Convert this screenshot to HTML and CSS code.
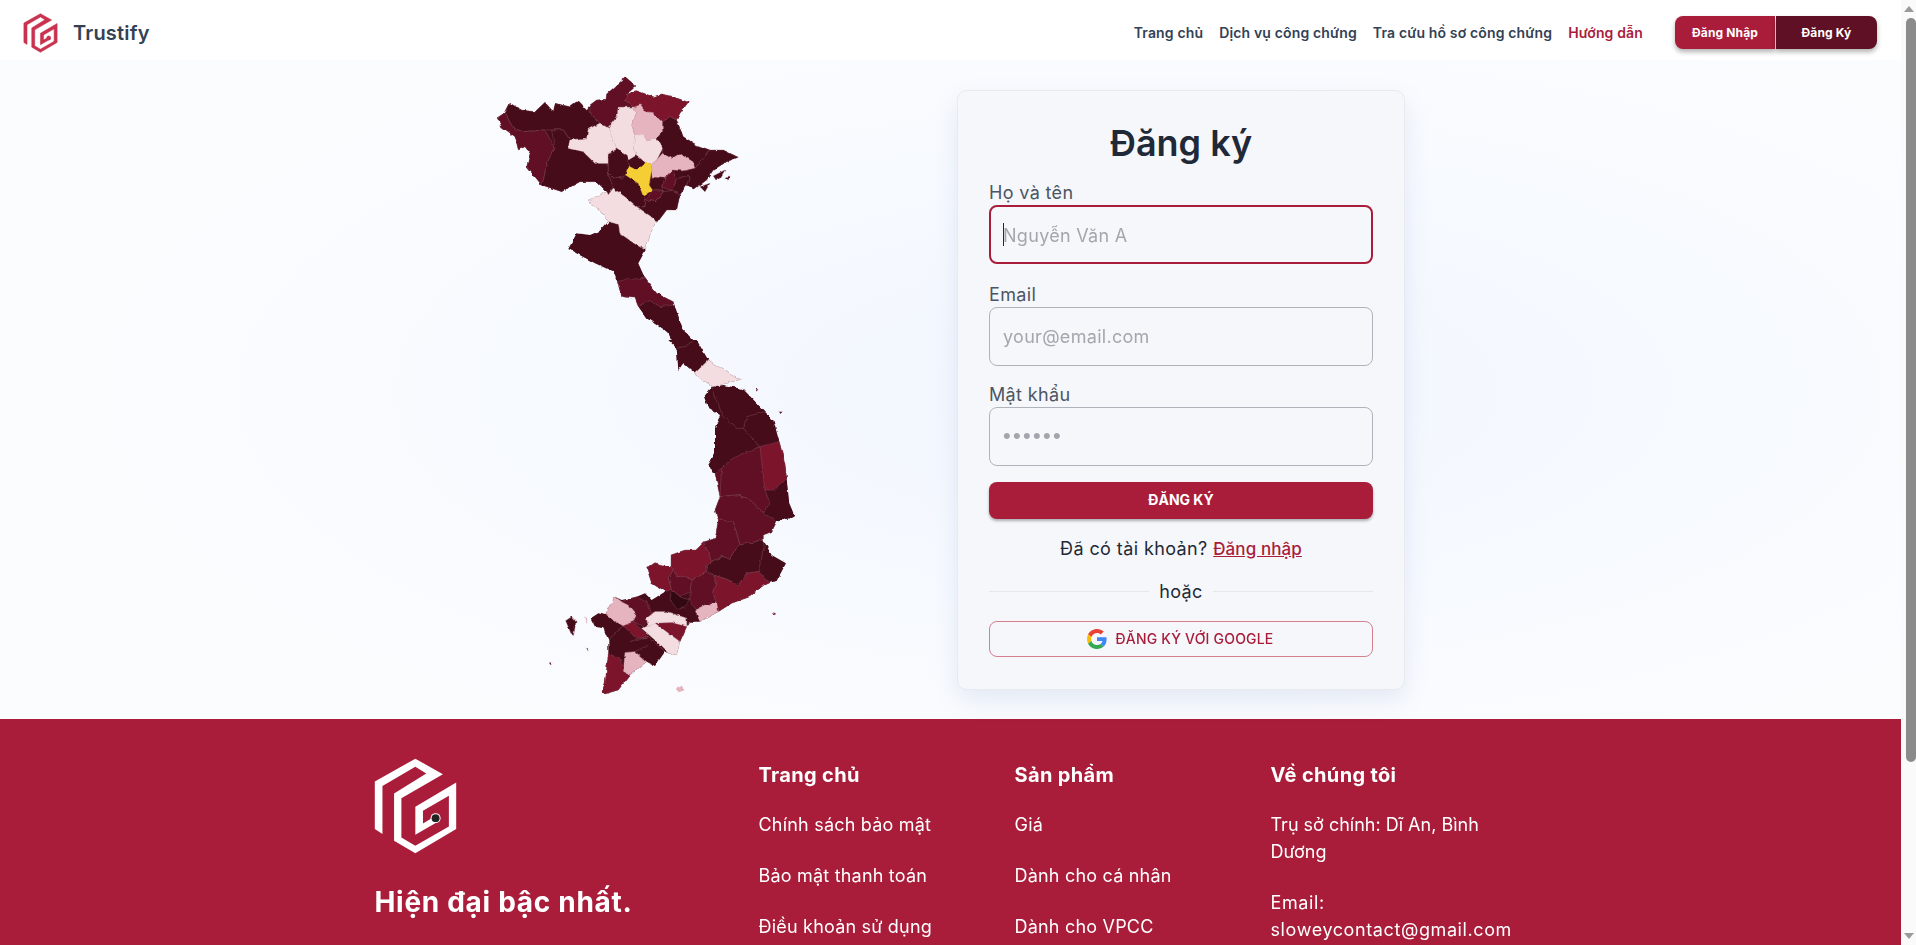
FILE: index.html
```html
<!DOCTYPE html>
<html lang="vi">
<head>
<meta charset="UTF-8">
<meta name="viewport" content="width=device-width, initial-scale=1.0">
<title>Trustify - Đăng ký</title>
<link rel="stylesheet" href="styles.css">
</head>
<body>

<svg class="defs" width="0" height="0" aria-hidden="true">
  <symbol id="logo" viewBox="70 83 255 295">
    <path d="M75 157 L197 88 L280 135 L155 207 L155 325 L197 350 L298 292 L298 200 L220 245 L220 283 L250 265 L270 275 L197 317 L197 233 L320 160 L320 300 L197 373 L133 335 L133 193 L230 133 L197 112 L98 170 L98 315 L75 300 Z"/>
    <circle class="logo-ring" cx="258" cy="267" r="15"/>
    <circle class="logo-dot" cx="258" cy="267" r="12"/>
  </symbol>
</svg>

<div class="app">
  <div class="page">

    <header class="navbar">
      <a class="brand" href="#">
        <svg class="brand-logo"><use href="#logo"/></svg>
        <span class="brand-name">Trustify</span>
      </a>
      <nav class="nav-links">
        <a href="#">Trang chủ</a>
        <a href="#">Dịch vụ công chứng</a>
        <a href="#">Tra cứu hồ sơ công chứng</a>
        <a href="#" class="active">Hướng dẫn</a>
      </nav>
      <div class="nav-buttons">
        <a href="#" class="btn-login">Đăng Nhập</a>
        <a href="#" class="btn-register">Đăng Ký</a>
      </div>
    </header>

    <main class="hero">
      <svg class="map" viewBox="496 70 320 640" aria-label="Bản đồ Việt Nam">
        <defs>
          <filter id="rough" x="-5%" y="-5%" width="110%" height="110%" color-interpolation-filters="sRGB">
            <feTurbulence type="fractalNoise" baseFrequency="0.16" numOctaves="2" seed="4" result="noise"/>
            <feDisplacementMap in="SourceGraphic" in2="noise" scale="3.5" xChannelSelector="R" yChannelSelector="G"/>
            <feGaussianBlur stdDeviation="0.3"/>
          </filter>
        </defs>
        <g filter="url(#rough)">
        <g transform="translate(480 70) scale(.3333)">
          <polygon class="c4 base" points="52,145 75,130 90,100 125,120 165,125 195,97 220,125 225,100 270,110 295,92 320,118 330,105 350,90 378,88 380,72 405,50 437,22 468,48 440,72 470,62 520,80 545,72 580,80 625,97 600,130 590,150 610,200 650,225 690,240 730,240 775,262 740,275 700,300 680,330 640,360 620,345 600,375 590,420 560,420 530,460 525,458 510,495 497,540 475,580 495,625 530,670 580,695 610,780 645,815 640,840 590,840 565,790 500,745 475,710 465,685 425,680 412,635 400,605 345,580 265,537 290,490 330,495 360,482 385,455 350,410 330,405 325,390 380,365 350,335 300,335 245,365 185,345 140,290 150,250 135,230 115,240 105,200 65,170"/>
          <polygon class="c3" points="380,72 405,50 437,22 468,48 440,72 437,92 462,112 415,112 412,140 385,175 360,160 330,130 330,105 350,90 378,88"/>
          <polygon class="c2" points="437,92 440,72 470,62 520,80 545,72 580,80 625,97 600,130 590,150 570,140 548,155 520,128 495,125 480,105 462,112"/>
          <polygon class="c4" points="75,130 90,100 125,120 165,125 195,97 220,125 225,100 270,110 295,92 320,118 330,130 360,160 350,165 325,178 320,205 270,210 250,180 215,180 195,180 130,185 100,175"/>
          <polygon class="c3" points="52,145 75,130 100,175 130,185 195,180 225,235 205,270 190,330 185,345 140,290 150,250 135,230 115,240 105,200 65,170"/>
          <polygon class="c4" points="215,180 250,180 270,210 265,235 310,245 345,280 385,280 385,310 400,350 385,375 380,365 350,335 300,335 245,365 185,345 190,330 205,270 225,235"/>
          <polygon class="c0" points="415,112 462,112 470,130 455,165 465,195 460,235 470,255 445,270 440,255 410,235 385,175 412,140"/>
          <polygon class="c0" points="325,178 350,165 360,160 385,175 410,235 385,250 385,280 345,280 310,245 265,235 270,210 320,205"/>
          <polygon class="c1" points="462,112 480,105 495,125 520,128 548,155 548,185 530,205 500,210 490,195 465,195 455,165 470,130"/>
          <polygon class="c0" points="465,195 490,195 500,210 530,205 548,235 530,270 513,285 497,278 470,255 460,235"/>
          <polygon class="c4" points="385,250 410,235 440,255 445,270 445,288 437,315 430,325 395,320 385,310 385,280"/>
          <polygon class="c4" points="385,310 395,320 430,325 437,315 475,340 490,378 498,390 495,410 470,410 440,385 400,355"/>
          <polygon class="c1" points="530,270 548,250 575,265 600,250 640,275 645,295 610,303 575,300 555,325 517,322 513,285"/>
          <polygon class="c4" points="548,155 570,140 590,150 610,200 650,225 690,240 670,265 645,295 640,275 600,250 575,265 548,250 548,235 530,205 548,185"/>
          <polygon class="c4" points="645,295 670,265 690,240 730,240 775,262 740,275 700,300 680,330 640,360 620,345 630,320 590,325 575,300 610,303"/>
          <polygon class="c4" points="517,322 555,325 545,350 550,365 517,360 507,345"/>
          <polygon class="c3" points="555,325 575,300 590,325 575,362 545,350"/>
          <polygon class="c4" points="590,325 630,320 620,345 600,375 575,362"/>
          <polygon class="c3" points="517,360 550,365 540,378 525,395 498,390"/>
          <polygon class="c4" points="550,365 575,362 600,375 590,420 560,420 530,460 520,445 470,410 495,410 498,390 525,395 540,378"/>
          <polygon class="yellow" points="445,288 470,300 497,278 513,285 515,300 507,345 517,360 490,378 475,340 437,315"/>
          <polygon class="c0" points="325,390 380,365 385,375 400,355 440,385 470,410 520,445 530,460 525,458 510,495 497,540 470,525 420,490 415,462 385,455 350,410 330,405"/>
          <polygon class="c3" points="412,635 440,628 495,625 530,670 580,695 580,705 540,710 510,692 475,710 465,685 425,680"/>
          <polygon class="c4" points="700,318 735,300 722,322 708,330"/>
          <polygon class="c4" points="735,322 750,318 745,330"/>
          <polygon class="c4" points="660,350 690,340 675,365"/>
        </g>
        <g transform="translate(540 340) scale(.3333)">
          <polygon class="c4 base" points="385,0 470,0 505,60 590,115 605,118 520,140 550,135 610,148 675,215 700,240 718,305 735,370 740,415 748,490 765,530 710,545 695,575 670,585 670,600 695,645 738,670 710,723 690,728 665,740 630,770 575,790 535,815 480,845 450,845 440,860 420,905 410,945 385,940 375,935 345,978 320,965 270,1005 235,1050 195,1062 185,1055 195,1030 205,940 205,900 190,865 165,860 152,835 175,820 195,825 225,770 245,780 290,770 315,760 335,780 375,755 335,730 320,685 345,668 393,680 393,645 435,630 465,630 490,605 525,595 535,540 525,510 540,470 525,400 515,395 505,375 525,340 525,265 540,225 505,205 492,170 515,140 520,140 480,115 465,100 430,70 415,90 410,25"/>
          <polygon class="c0" points="505,60 590,115 605,118 520,140 480,115 465,100"/>
          <polygon class="c3" points="545,385 570,360 610,340 660,320 690,445 675,450 690,490 670,518 625,475 590,465 540,470 525,400"/>
          <polygon class="c2" points="660,320 718,305 735,370 740,415 700,450 675,450"/>
          <polygon class="c3" points="540,470 590,465 625,475 670,518 710,545 695,575 670,585 670,600 600,615 580,545 535,540 525,510"/>
          <polygon class="c3" points="535,540 580,545 600,615 585,630 570,655 545,650 515,665 490,605 525,595"/>
          <polygon class="c4" points="585,630 600,615 670,600 672,620 655,695 620,700 595,735 560,718 520,705 497,680 515,665 545,650 570,655"/>
          <polygon class="c2" points="520,705 560,718 595,735 620,700 655,695 690,728 665,740 630,770 575,790 535,815 530,790 520,760 530,730"/>
          <polygon class="c2" points="393,645 435,630 465,630 490,605 515,665 497,680 500,695 455,723 435,708 410,710 393,680"/>
          <polygon class="c2" points="320,685 345,668 393,680 400,690 385,715 395,748 375,755 335,730"/>
          <polygon class="c3" points="385,715 400,690 410,710 435,708 455,723 450,755 420,770 395,748"/>
          <polygon class="c3" points="455,723 500,695 520,705 530,730 520,760 530,790 495,795 465,810 450,780 450,755"/>
          <polygon class="c1" points="465,810 495,795 530,790 535,815 480,845"/>
          <polygon class="c5" points="395,748 420,770 450,780 435,800 410,805 390,780"/>
          <polygon class="c1" points="225,770 245,785 265,795 290,825 280,845 250,858 195,825"/>
          <polygon class="c3" points="245,785 290,770 325,790 335,825 310,860 280,845 290,825 265,795"/>
          <polygon class="c0" points="320,835 345,815 380,815 440,835 440,860 395,848 345,850 325,860"/>
          <polygon class="c2" points="345,850 395,848 440,860 420,905 385,880"/>
          <polygon class="c0" points="305,865 330,858 345,850 385,880 420,905 410,945 385,940 345,900"/>
          <polygon class="c2" points="250,858 280,845 325,890 290,895"/>
          <polygon class="c1" points="255,938 285,935 320,965 270,1005 250,995"/>
          <polygon class="c2" points="205,940 245,960 250,995 270,1005 235,1050 195,1062 185,1055 195,1030"/>
          <polygon class="c4" points="77,842 95,830 108,845 100,890 95,885"/>
          <polygon class="c1" points="408,1050 425,1038 433,1050 415,1056"/>
          <polygon class="c2" points="700,818 707,820 704,827"/>
          <polygon class="c1" points="137,834 141,834 140,850"/>
          <polygon class="c3" points="28,968 36,968 32,975"/>
          <polygon class="c3" points="138,920 146,925 144,932"/>
          <polygon class="c4" points="718,215 727,216 722,222"/>
          <polygon class="c3" points="645,146 654,148 650,154"/>
          <polyline class="seam" points="410,25 430,20 460,5"/>
          <polyline class="seam" points="465,100 505,60"/>
          <polyline class="seam" points="515,140 550,230 590,265 610,265 620,230 675,215"/>
          <polyline class="seam" points="610,265 660,320"/>
          <polyline class="seam" points="540,470 545,385"/>
          <polyline class="seam" points="250,858 205,900"/>
          <polyline class="seam" points="270,905 325,890 330,895 375,935"/>
          <polyline class="seam" points="285,935 325,915"/>
        </g>
        </g>
      </svg>

      <section class="card">
        <h1>Đăng ký</h1>
        <form>
          <div class="field field-focus">
            <label for="name">Họ và tên</label>
            <div class="input-wrap">
              <input type="text" id="name" placeholder="Nguyễn Văn A">
              <span class="caret"></span>
            </div>
          </div>
          <div class="field">
            <label for="email">Email</label>
            <div class="input-wrap">
              <input type="email" id="email" placeholder="your@email.com">
            </div>
          </div>
          <div class="field">
            <label for="password">Mật khẩu</label>
            <div class="input-wrap">
              <input type="text" class="password" id="password" placeholder="••••••">
            </div>
          </div>
          <button type="button" class="submit">ĐĂNG KÝ</button>
        </form>
        <p class="switch">Đã có tài khoản? <a href="#">Đăng nhập</a></p>
        <div class="divider"><span>hoặc</span></div>
        <button type="button" class="google">
          <svg viewBox="0 0 48 48" width="20" height="20">
            <path fill="#EA4335" d="M24 9.5c3.54 0 6.71 1.22 9.21 3.6l6.85-6.85C35.9 2.38 30.47 0 24 0 14.62 0 6.51 5.38 2.56 13.22l7.98 6.19C12.43 13.72 17.74 9.5 24 9.5z"/>
            <path fill="#4285F4" d="M46.98 24.55c0-1.57-.15-3.09-.38-4.55H24v9.02h12.94c-.58 2.96-2.26 5.48-4.78 7.18l7.73 6c4.51-4.18 7.09-10.36 7.09-17.65z"/>
            <path fill="#FBBC05" d="M10.53 28.59c-.48-1.45-.76-2.99-.76-4.59s.27-3.14.76-4.59l-7.98-6.19C.92 16.46 0 20.12 0 24c0 3.88.92 7.54 2.56 10.78l7.97-6.19z"/>
            <path fill="#34A853" d="M24 48c6.48 0 11.93-2.13 15.89-5.81l-7.73-6c-2.15 1.45-4.92 2.3-8.16 2.3-6.26 0-11.57-4.22-13.47-9.91l-7.98 6.19C6.51 42.62 14.62 48 24 48z"/>
          </svg>
          ĐĂNG KÝ VỚI GOOGLE
        </button>
      </section>
    </main>

    <footer class="footer">
      <div class="footer-grid">
        <div class="footer-brand">
          <svg class="footer-logo"><use href="#logo"/></svg>
          <h2>Hiện đại bậc nhất.</h2>
        </div>
        <div class="footer-col">
          <h3>Trang chủ</h3>
          <a href="#">Chính sách bảo mật</a>
          <a href="#">Bảo mật thanh toán</a>
          <a href="#">Điều khoản sử dụng</a>
        </div>
        <div class="footer-col">
          <h3>Sản phẩm</h3>
          <a href="#">Giá</a>
          <a href="#">Dành cho cá nhân</a>
          <a href="#">Dành cho VPCC</a>
        </div>
        <div class="footer-col">
          <h3>Về chúng tôi</h3>
          <p>Trụ sở chính: Dĩ An, Bình Dương</p>
          <p class="footer-email">Email: sloweycontact@gmail.com</p>
        </div>
      </div>
    </footer>

  </div>

  <div class="scrollbar">
    <span class="arrow-up"></span>
    <span class="thumb"></span>
    <span class="arrow-down"></span>
  </div>
</div>

</body>
</html>
```

FILE: styles.css
```css
* {
  box-sizing: border-box;
}
body {
  margin: 0;
  font-family: Inter, "Noto Sans", sans-serif;
  background-color: #fff;
  color: #1f2937;
}
a {
  text-decoration: none;
  color: inherit;
}
.defs {
  position: absolute;
}
.app {
  display: flex;
  height: 945px;
  overflow: hidden;
}
.page {
  flex: 1;
  min-width: 0;
}

/* navbar */
.navbar {
  display: flex;
  align-items: center;
  height: 60px;
  padding: 5px 24px 0 23px;
  background-color: #fff;
}
.brand {
  display: flex;
  align-items: center;
  gap: 15px;
  margin-right: auto;
}
.brand-logo {
  width: 35px;
  height: 40px;
  color: #c9334f;
  fill: #c9334f;
  stroke: #c9334f;
  stroke-width: 4;
  --dot: #c9334f;
}
.brand-name {
  font-size: 20px;
  font-weight: 600;
  letter-spacing: 0.2px;
  color: #334155;
}
.nav-links {
  display: flex;
  gap: 16px;
  margin-right: 32px;
  font-size: 14px;
  font-weight: 600;
  letter-spacing: 0.15px;
  color: #334155;
}
.nav-links .active {
  color: #a91d3a;
}
.nav-buttons {
  display: flex;
  gap: 1px;
  font-size: 12px;
  font-weight: 700;
  letter-spacing: 0.15px;
  color: #fff;
}
.nav-buttons a {
  display: flex;
  align-items: center;
  justify-content: center;
  height: 33px;
  box-shadow: 0 3px 5px rgba(0, 0, 0, 0.3);
}
.btn-login {
  width: 100px;
  background-color: #a91d3a;
  border-radius: 8px 0 0 8px;
}
.btn-register {
  width: 101px;
  background-color: #601024;
  border-radius: 0 8px 8px 0;
}

/* map + form */
.hero {
  display: flex;
  justify-content: center;
  align-items: center;
  gap: 141px;
  height: 659px;
  background: radial-gradient(ellipse 55% 60% at 60% 50%, #f1f6fe 0%, #f7faff 60%, #fbfcfe 100%);
}
.map {
  width: 320px;
  height: 640px;
}
.map polygon,
.map polyline {
  stroke: #8d5866;
  stroke-width: 1.2;
  stroke-linejoin: round;
}
.map polyline {
  fill: none;
}
.map .base {
  stroke: none;
}
.c0 { fill: #f3dde1; stroke: #e9cdd3 !important; }
.c1 { fill: #e5b4bf; stroke: #dba6b2 !important; }
.c2 { fill: #7c142c; }
.c3 { fill: #600f24; }
.c4 { fill: #470c1a; }
.c5 { fill: #320812; }
.yellow { fill: #f5ce35; stroke: #e4bc2e !important; }

.card {
  width: 448px;
  height: 600px;
  padding: 32px 31px 0;
  background-color: #f5f7fb;
  border: 1px solid #e8eaef;
  border-radius: 10px;
  box-shadow: 0 10px 25px rgba(100, 130, 180, 0.14);
}
.card h1 {
  margin: 0 0 17px;
  font-size: 36px;
  line-height: 40px;
  font-weight: 600;
  text-align: center;
  color: #1f2937;
}
.field {
  margin-bottom: 16px;
}
.field-focus {
  margin-bottom: 18px;
}
.field label {
  display: block;
  height: 25px;
  font-size: 18px;
  line-height: 26px;
  letter-spacing: 0.35px;
  color: #4b5563;
}
.input-wrap {
  position: relative;
}
.input-wrap input {
  display: block;
  width: 100%;
  height: 59px;
  padding: 0 13px;
  font-family: inherit;
  font-size: 18px;
  letter-spacing: 0.3px;
  color: #1f2937;
  background: transparent;
  border: 1px solid #b0b3bb;
  border-radius: 8px;
  outline: none;
}
.field-focus input {
  padding: 2px 12px 0;
  border: 2px solid #a91d3a;
}
.input-wrap input::placeholder {
  color: #a3a6ad;
  opacity: 1;
}
.input-wrap .password::placeholder {
  font-family: "Liberation Sans", sans-serif;
  font-size: 22px;
  letter-spacing: 2.3px;
}
.caret {
  position: absolute;
  left: 14px;
  top: 18px;
  width: 1px;
  height: 23px;
  background-color: #1f2937;
}
.submit {
  display: block;
  width: 100%;
  height: 37px;
  padding: 0 0 2px;
  font-family: inherit;
  font-size: 14px;
  font-weight: 700;
  color: #fff;
  background-color: #a91d3a;
  border: none;
  border-radius: 8px;
  box-shadow: 0 2px 3px rgba(0, 0, 0, 0.3);
}
.switch {
  margin: 16px 0 0;
  font-size: 18px;
  line-height: 28px;
  letter-spacing: 0.4px;
  text-align: center;
  color: #1f2937;
}
.switch a {
  font-size: 17px;
  font-weight: 500;
  letter-spacing: 0.1px;
  color: #a91d3a;
  text-decoration: underline;
}
.divider {
  display: flex;
  align-items: center;
  margin: 15px 0 15px;
  font-size: 18px;
  line-height: 28px;
  letter-spacing: 0.4px;
}
.divider::before,
.divider::after {
  content: "";
  flex: 1;
  height: 1px;
  background-color: #e5e7eb;
}
.divider span {
  padding: 0 10px;
}
.google {
  display: flex;
  align-items: center;
  justify-content: center;
  gap: 9px;
  width: 100%;
  height: 36px;
  padding: 0 2px 0 0;
  font-family: inherit;
  font-size: 14px;
  font-weight: 500;
  letter-spacing: 0.2px;
  color: #a91d3a;
  background: transparent;
  border: 1px solid #d4808f;
  border-radius: 8px;
}

/* footer */
.footer {
  height: 226px;
  padding-top: 40px;
  background-color: #a91d3a;
  color: #fff;
}
.footer-grid {
  display: grid;
  grid-template-columns: 384px 256px 256px 256px;
  width: 1152px;
  margin: 0 auto;
}
.footer-logo {
  display: block;
  width: 85px;
  height: 98px;
  margin: -2px 0 0 -2px;
  fill: #fff;
}
.logo-dot {
  fill: var(--dot, #222);
  stroke: none;
}
.footer-brand h2 {
  margin: 29px 0 0;
  font-size: 28px;
  line-height: 36px;
  font-weight: 700;
  letter-spacing: 0.7px;
}
.footer-col {
  padding-right: 12px;
  font-size: 18px;
  line-height: 27px;
  letter-spacing: 0.2px;
}
.footer-col h3 {
  margin: 2px 0 22px;
  font-size: 20px;
  line-height: 28px;
  font-weight: 700;
  letter-spacing: 0.35px;
}
.footer-col a {
  display: block;
  margin-bottom: 24px;
}
.footer-col p {
  margin: 0 0 24px;
  letter-spacing: 0;
}
.footer-col .footer-email {
  letter-spacing: 0.6px;
}

/* scrollbar */
.scrollbar {
  display: flex;
  flex-direction: column;
  align-items: center;
  flex: none;
  width: 15px;
  height: 945px;
  background-color: #fafafa;
}
.thumb {
  width: 10px;
  height: 744px;
  margin: 6px 0 auto 4px;
  background-color: #8b8b8b;
  border-radius: 5px;
}
.arrow-up,
.arrow-down {
  width: 0;
  height: 0;
  border-left: 5px solid transparent;
  border-right: 5px solid transparent;
}
.arrow-up {
  margin-top: 6px;
  border-bottom: 6px solid #9a9a9a;
}
.arrow-down {
  margin-bottom: 6px;
  border-top: 6px solid #9a9a9a;
}
```
